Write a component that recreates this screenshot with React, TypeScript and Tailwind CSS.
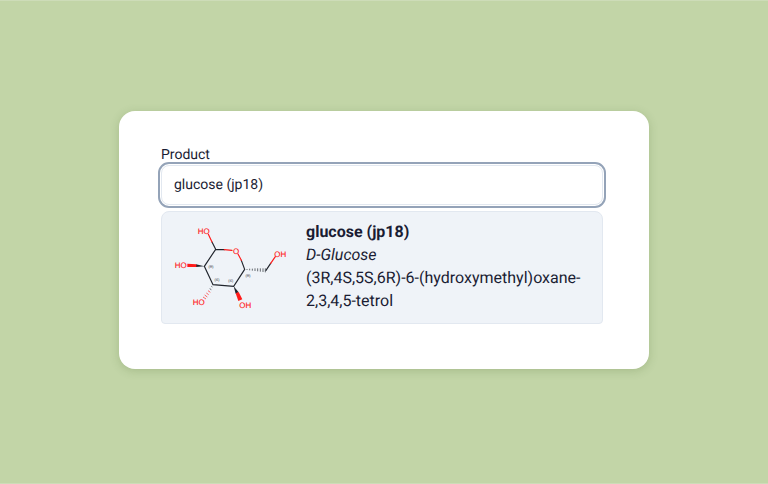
import { useState } from "react";

const atomLabels = [
  { x: 116, y: 56, text: "HO" },
  { x: 47, y: 159, text: "HO" },
  { x: 101, y: 270, text: "HO" },
  { x: 241, y: 279, text: "OH" },
  { x: 346, y: 126, text: "OH" },
  { x: 213, y: 116, text: "O" },
];

const stereoLabels = [
  { x: 138, y: 160, text: "(R)" },
  { x: 156, y: 197, text: "(S)" },
  { x: 197, y: 201, text: "(S)" },
  { x: 249, y: 186, text: "(R)" },
];

function GlucoseStructure() {
  return (
    <svg viewBox="0 0 390 315" className="h-[105px] w-[130px] shrink-0" role="img" aria-label="Structure of glucose">
      <g fill="none" strokeWidth="3.5" strokeLinecap="round">
        <path className="stroke-[#20242c]" d="M178 104 152 103 118 154 144 209 206 214 239 163 229 136M152 103 141 81M303 166 317 145" />
        <path className="stroke-[#ff1a1a]" d="M178 104 201 106M229 136 219 117M141 81 130 58M317 145 331 125" />
      </g>
      <path className="fill-[#20242c]" d="M118 154 93 148V156Z" />
      <path className="fill-[#ff1a1a]" d="M94 148 67 146V156L94 156Z" />
      <path className="fill-[#20242c]" d="M206 214 212 236 221 232Z" />
      <path className="fill-[#ff1a1a]" d="M212 235 220 258 232 253 221 231Z" />
      <g fill="none" strokeWidth="2">
        <path className="stroke-[#20242c]" d="M246 162V165M254 161V166M262 161V167M270 160V168M278 160V169M286 160V170M294 160V171M301 160V172M139 214 142 216M134 221 139 224" />
        <path className="stroke-[#ff1a1a]" d="M129 227 136 232M124 234 131 239M119 240 127 246M114 246 123 252" />
      </g>
      <g className="fill-[#ff1a1a] stroke-[#ff1a1a]" strokeWidth="0.4" fontFamily="'Liberation Sans', Arial, sans-serif" fontSize="24" textAnchor="middle">
        {atomLabels.map((a) => (
          <text key={`${a.x}-${a.y}`} x={a.x} y={a.y}>{a.text}</text>
        ))}
      </g>
      <g className="fill-[#20242c]" fontFamily="'Liberation Sans', Arial, sans-serif" fontSize="11" textAnchor="middle">
        {stereoLabels.map((s) => (
          <text key={`${s.x}-${s.y}`} x={s.x} y={s.y}>{s.text}</text>
        ))}
      </g>
    </svg>
  );
}

export default function App() {
  const [value, setValue] = useState("glucose (jp18)");
  return (
    <main className="flex min-h-screen items-center justify-center border-y border-[#cddcb8] bg-[#c2d5a7] px-4 font-[Roboto,sans-serif] text-[#1a1c33] [text-rendering:geometricPrecision]">
      <section className="mb-1 w-full max-w-[530px] rounded-2xl bg-white pt-[34px] pr-[46px] pb-[45px] pl-[42px] shadow-[0_2px_10px_rgba(70,100,40,0.22)]">
        <label htmlFor="product" className="block text-sm leading-5">Product</label>
        <input
          id="product"
          type="text"
          value={value}
          onChange={(e) => setValue(e.target.value)}
          className="block h-10 w-full rounded-lg border border-[#e2e8f0] bg-white px-3 text-sm outline-2 outline-offset-1 outline-[#94a3b8] [text-rendering:geometricPrecision]"
        />
        <ul role="listbox" aria-label="Products" className="mt-[6px] rounded-t-lg rounded-b-sm border border-[#e2e8f0] bg-[#eff3f8]">
          <li role="option" aria-selected="true" className="flex items-start gap-[11px] px-[3px] py-[3px]">
            <GlucoseStructure />
            <div className="pt-[5px] text-base leading-[23px]">
              <div className="font-bold">glucose (jp18)</div>
              <div className="italic">D-Glucose</div>
              <div>(3R,4S,5S,6R)-6-(hydroxymethyl)oxane-2,3,4,5-tetrol</div>
            </div>
          </li>
        </ul>
      </section>
    </main>
  );
}
